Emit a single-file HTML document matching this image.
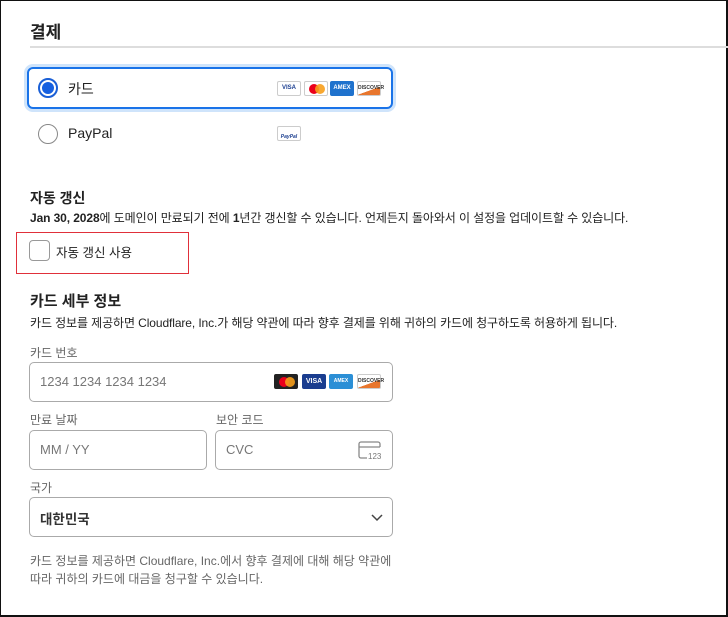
<!DOCTYPE html>
<html><head><meta charset="utf-8"><style>
*{box-sizing:border-box;margin:0;padding:0}
html,body{width:728px;height:617px;overflow:hidden;background:#fff}
body{font-family:"Liberation Sans","Noto Sans CJK KR",sans-serif;color:#222;position:relative}
.frame{position:absolute;left:0;top:0;width:728px;height:617px;border-left:1px solid #111;border-top:1px solid #111;border-right:2px solid #111;border-bottom:2px solid #111}
.a{position:absolute;white-space:nowrap}
.inp{position:absolute;border:1px solid #aaa;border-radius:5px;background:#fff}
.ph{position:absolute;left:10px;top:11px;font-size:13px;color:#777}
.lbl{font-size:12px;color:#666}
.ci{position:absolute;width:24px;height:15px;border:1px solid #ccc;border-radius:2px;background:#fff;font-size:6px;font-weight:bold;text-align:center;line-height:13px}
.mc1{position:absolute;left:4px;top:2px;width:10px;height:10px;border-radius:50%;background:#eb001b}
.mc2{position:absolute;left:10px;top:2px;width:10px;height:10px;border-radius:50%;background:#f79e1b;opacity:.9}
</style></head><body>
<div class="frame"></div>
<div class="a" style="left:30px;top:18px;font-size:17px;font-weight:bold">결제</div>
<div class="a" style="left:30px;top:46px;width:698px;height:2px;background:#ddd"></div>

<div class="a" style="left:27px;top:67px;width:366px;height:42px;border:2px solid #1a73e8;border-radius:6px;box-shadow:0 0 0 3px #cfe4fb"></div>
<div class="a" style="left:38px;top:78px;width:20px;height:20px;border:2px solid #1a5fd6;border-radius:50%;background:#fff"><div style="position:absolute;left:2px;top:2px;width:12px;height:12px;border-radius:50%;background:#1660e0"></div></div>
<div class="a" style="left:68px;top:79px;font-size:14px">카드</div>
<div class="ci" style="left:277px;top:81px;color:#1a3d8f">VISA</div>
<div class="ci" style="left:304px;top:81px"><span class="mc1"></span><span class="mc2"></span></div>
<div class="ci" style="left:330px;top:81px;background:#1f72cd;border-color:#1f72cd;color:#fff">AMEX</div>
<div class="ci" style="left:357px;top:81px;color:#333;font-size:5px;background:linear-gradient(160deg,#fff 60%,#e8762d 61%)">DISCOVER</div>

<div class="a" style="left:38px;top:124px;width:20px;height:20px;border:1.5px solid #888;border-radius:50%"></div>
<div class="a" style="left:68px;top:125px;font-size:14px">PayPal</div>
<div class="ci" style="left:277px;top:126px;color:#1a3d8f;font-style:italic;font-size:5px;line-height:20px">PayPal</div>

<div class="a" style="left:30px;top:188px;font-size:14px;font-weight:bold">자동 갱신</div>
<div class="a" style="left:30px;top:209px;font-size:12px;letter-spacing:-0.1px"><b>Jan 30, 2028</b>에 도메인이 만료되기 전에 <b>1</b>년간 갱신할 수 있습니다. 언제든지 돌아와서 이 설정을 업데이트할 수 있습니다.</div>
<div class="a" style="left:16px;top:232px;width:173px;height:42px;border:1px solid #e0303a"></div>
<div class="a" style="left:29px;top:240px;width:21px;height:21px;border:1.5px solid #999;border-radius:4px"></div>
<div class="a" style="left:56px;top:242px;font-size:12.5px">자동 갱신 사용</div>

<div class="a" style="left:30px;top:290px;font-size:15px;font-weight:bold">카드 세부 정보</div>
<div class="a" style="left:30px;top:314px;font-size:12px;letter-spacing:-0.1px">카드 정보를 제공하면 Cloudflare, Inc.가 해당 약관에 따라 향후 결제를 위해 귀하의 카드에 청구하도록 허용하게 됩니다.</div>

<div class="a lbl" style="left:30px;top:344px">카드 번호</div>
<div class="inp" style="left:29px;top:362px;width:364px;height:40px"><div class="ph">1234 1234 1234 1234</div></div>
<div class="ci" style="left:274px;top:374px;background:#222;border-color:#222"><span class="mc1"></span><span class="mc2"></span></div>
<div class="ci" style="left:302px;top:374px;background:#1a3d8f;border-color:#1a3d8f;color:#fff;font-size:7px">VISA</div>
<div class="ci" style="left:329px;top:374px;background:#2b8fd6;border-color:#2b8fd6;color:#fff;font-size:5px">AMEX</div>
<div class="ci" style="left:357px;top:374px;color:#333;font-size:5px;background:linear-gradient(160deg,#fff 60%,#e8762d 61%)">DISCOVER</div>

<div class="a lbl" style="left:30px;top:411px">만료 날짜</div>
<div class="a lbl" style="left:216px;top:411px">보안 코드</div>
<div class="inp" style="left:29px;top:430px;width:178px;height:40px"><div class="ph">MM / YY</div></div>
<div class="inp" style="left:215px;top:430px;width:178px;height:40px"><div class="ph">CVC</div>
<svg style="position:absolute;left:142px;top:10px" width="26" height="20" viewBox="0 0 26 20"><path d="M22 6V3a2 2 0 0 0-2-2H3a2 2 0 0 0-2 2v12a2 2 0 0 0 2 2h6M1 6h21" fill="none" stroke="#888" stroke-width="1.3"/><text x="10" y="18" font-size="8" fill="#777" font-family="Liberation Sans">123</text></svg></div>

<div class="a lbl" style="left:30px;top:479px">국가</div>
<div class="inp" style="left:29px;top:497px;width:364px;height:40px"><div class="a" style="left:10px;top:10px;font-size:13.5px;font-weight:bold;color:#333">대한민국</div>
<svg style="position:absolute;left:341px;top:16px" width="12" height="8" viewBox="0 0 12 8"><path d="M1 1l5 5 5-5" fill="none" stroke="#444" stroke-width="1.5"/></svg></div>

<div class="a" style="left:30px;top:552px;font-size:12px;color:#666;line-height:18px">카드 정보를 제공하면 Cloudflare, Inc.에서 향후 결제에 대해 해당 약관에<br>따라 귀하의 카드에 대금을 청구할 수 있습니다.</div>
</body></html>
